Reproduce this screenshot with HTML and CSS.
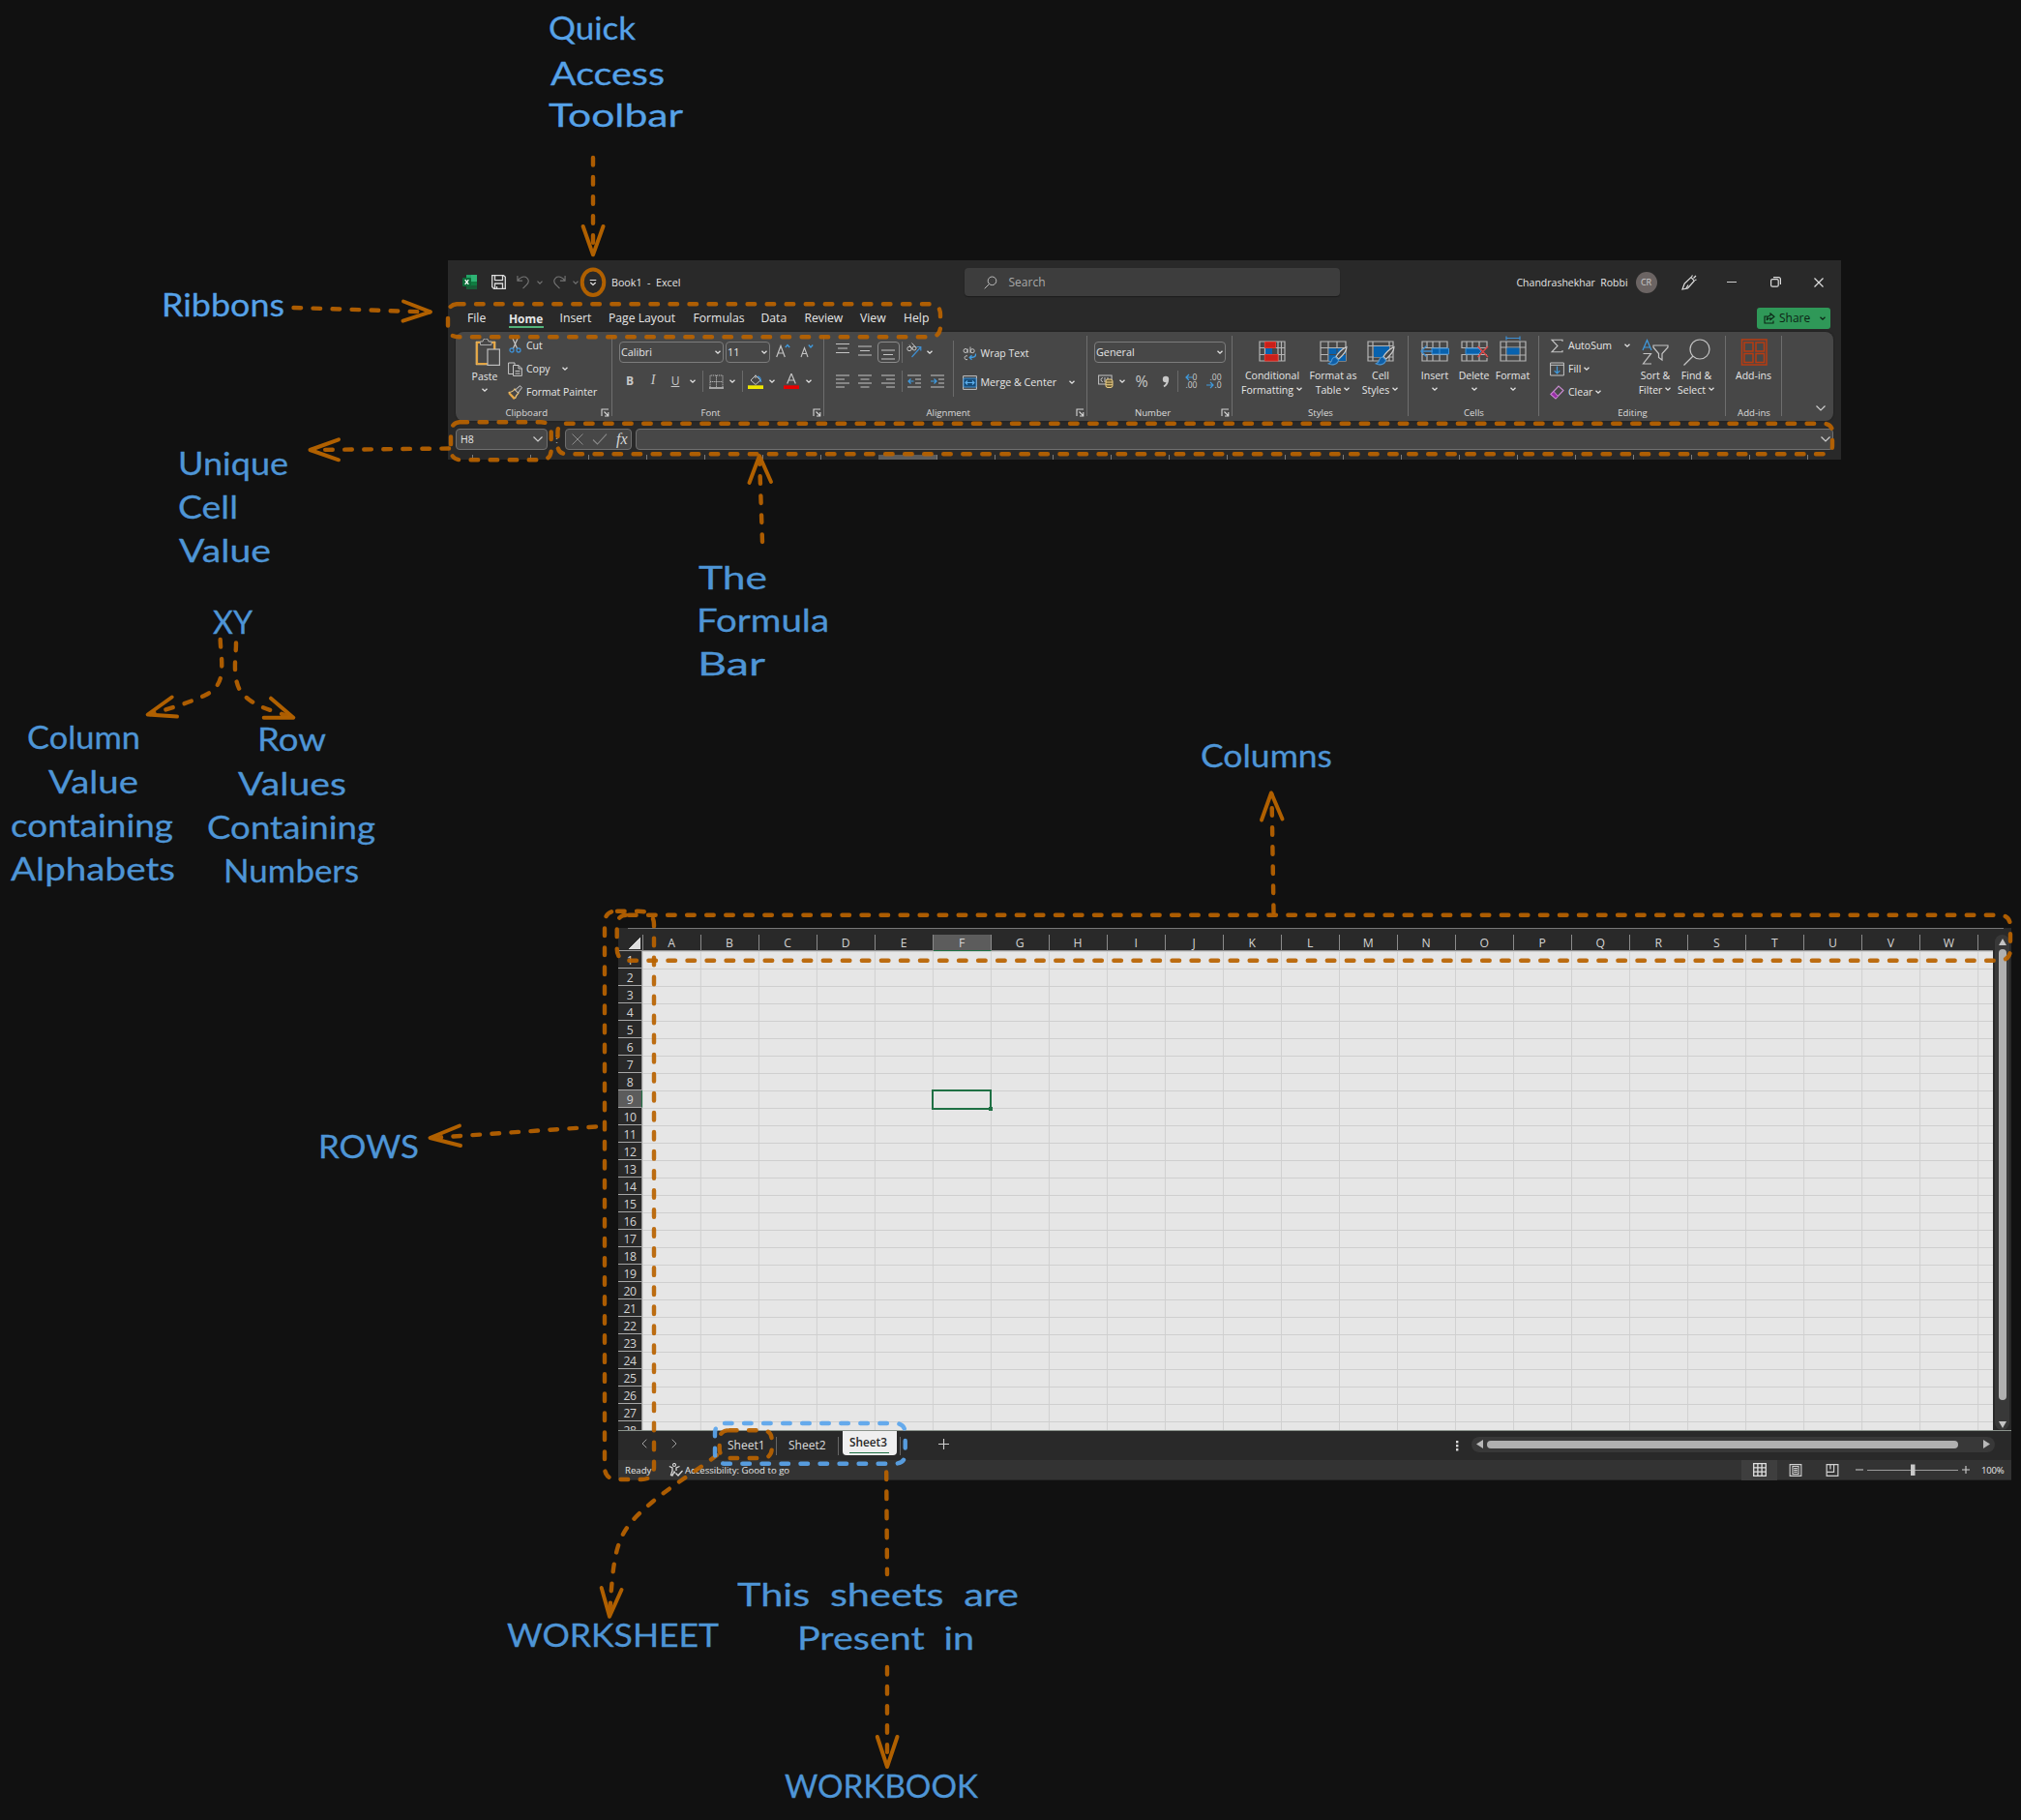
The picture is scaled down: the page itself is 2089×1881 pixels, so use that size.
FILE: index.html
```html
<!DOCTYPE html>
<html lang="en">
<head>
<meta charset="utf-8">
<title>Excel window anatomy</title>
<link rel="stylesheet" href="styles.css">
</head>
<body>
<svg class="defs" width="0" height="0">
  <symbol id="chev" viewBox="0 0 8 8"><path d="M1.5 2.7 4 5.2 6.5 2.7" fill="none" stroke="#e2e2e2" stroke-width="1.3"/></symbol>
  <symbol id="chev-lg" viewBox="0 0 12 8"><path d="M1.5 1.5 6 6 10.500 1.500" fill="none" stroke="#cfcfcf" stroke-width="1.2"/></symbol>
  <symbol id="launch" viewBox="0 0 9 9"><path d="M1 8V1h7M3.500 3.500 7.500 7.500M7.800 4v4H4" fill="none" stroke="#d5d5d5" stroke-width="1.100"/></symbol>
  <symbol id="brush" viewBox="0 0 20 20"><path d="M19 1.500c-4 1-9 7-10.500 9.500l2.500 2.500C14 11 19 6 19 1.500z" fill="#474747" stroke="#c8c8c8" stroke-width="1.200"/><path d="M8 11.500c-3 0-3.500 2-4 4-.5 1.500-1.500 2-3 2.500 3 1.500 9 1.500 10-3.500z" fill="#0f5fa8" stroke="#4c97d3"/></symbol>
</svg>

<main class="canvas">
  <section class="window ribbon-window">
    <header class="titlebar">
      <svg class="logo" viewBox="0 0 15 15"><rect x="4" width="11" height="15" rx="1" fill="#107c41"/><rect x="9" width="6" height="7" fill="#2fb374"/><rect x="4" y="0" width="5" height="4" fill="#21a366"/><rect x="4" y="11" width="11" height="4" fill="#185c37"/><rect y="3" width="9" height="9" rx="1" fill="#0c6b38"/><path d="M2.700 5.200 6.300 9.900M6.300 5.200 2.700 9.900" stroke="#fff" stroke-width="1.300"/></svg>
      <svg class="save" viewBox="0 0 15 15"><path d="M.7.700h11.800l1.800 1.500v12.100H2.500L.7 12.500zM3.500.7v5h8v-5M3.500 14.300V9h8v5.300M5.500 14v-2" fill="none" stroke="#dcdcdc" stroke-width="1.300"/></svg>
      <svg class="undo" viewBox="0 0 15 15"><path d="M1 .5V6h5.500M1 6C4 1.500 9 .5 11.500 3s1.500 5.500-.5 7.500L7 14.500" fill="none" stroke="#757575" stroke-width="1.200"/></svg>
      <svg class="dim-chev" viewBox="0 0 8 8"><path d="M1.500 2.700 4 5.200 6.500 2.700" fill="none" stroke="#757575" stroke-width="1.200"/></svg>
      <svg class="redo" viewBox="0 0 15 15"><path d="M14 .5V6H8.500M14 6C11 1.500 6 .5 3.500 3S2 8.500 4 10.500l4 4" fill="none" stroke="#757575" stroke-width="1.200"/></svg>
      <svg class="dim-chev" viewBox="0 0 8 8"><path d="M1.500 2.700 4 5.200 6.500 2.700" fill="none" stroke="#757575" stroke-width="1.200"/></svg>
      <svg class="qat" viewBox="0 0 8 8"><path d="M.7 1.500h6.600M1.300 4 4 6.500 6.700 4" fill="none" stroke="#e4e4e4" stroke-width="1.200"/></svg>
      <span class="book">Book1&nbsp; -&nbsp; Excel</span>
      <div class="search"><svg viewBox="0 0 14 14"><circle cx="8.500" cy="5.300" r="4.300" fill="none" stroke="#bdbdbd"/><path d="M5.500 8.500.7 13.300" stroke="#bdbdbd"/></svg><span>Search</span></div>
      <span class="user">Chandrashekhar&nbsp; Robbi</span>
      <span class="avatar">CR</span>
      <svg class="pen" viewBox="0 0 16 16"><path d="M1 15 3.200 9 10 2.500l3.300 3.700L6.500 14 1 15zM4.500 14.500 7 10.500M10.500 2 11.500.5M12.500 3.500 15 1M14 5.500 15.500 5" fill="none" stroke="#dedede" stroke-width="1.200"/></svg>
      <span class="min"></span>
      <svg class="restore" viewBox="0 0 11 11"><rect x=".6" y="2.600" width="7.600" height="7.600" rx="1.500" fill="none" stroke="#dedede" stroke-width="1.200"/><path d="M3 .6h5.400a2 2 0 0 1 2 2V8" fill="none" stroke="#dedede" stroke-width="1.200"/></svg>
      <svg class="close" viewBox="0 0 10 10"><path d="M.5.500l9 9M9.500.5l-9 9" stroke="#dedede" stroke-width="1.200"/></svg>
    </header>

    <nav class="tabs">
      <span class="t-file">File</span><span class="t-home">Home</span><span class="t-insert">Insert</span><span class="t-page">Page Layout</span><span class="t-form">Formulas</span><span class="t-data">Data</span><span class="t-review">Review</span><span class="t-view">View</span><span class="t-help">Help</span>
      <div class="share"><svg viewBox="0 0 12 12"><path d="M4 4H1v7h9V8.500M7 1l4 3.300L7 7.500V5.700C5 5.700 4 6.500 3.300 8c0-3 1.500-4.700 3.700-5z" fill="none" stroke="#0c2415" stroke-width="1.100"/></svg><span>Share</span><svg class="c" viewBox="0 0 8 8"><path d="M1.500 2.700 4 5.200 6.500 2.700" fill="none" stroke="#0c2415" stroke-width="1.300"/></svg></div>
    </nav>

    <div class="ribbon">
      <div class="group g-clip">
        <div class="body">
          <div class="paste">
            <svg viewBox="0 0 26 28"><path d="M2 4h18v22H2z" fill="none" stroke="#e0a03c" stroke-width="2.200"/><path d="M1 3h20v24H1z" fill="none" stroke="#f0d090" stroke-width=".5"/><path d="M5.500 6.500V3H8a3 3 0 0 1 6 0h3v3.500z" fill="#474747" stroke="#a8a8a8"/><rect x="13" y="11" width="12.400" height="16.400" fill="#474747" stroke="#bdbdbd" stroke-width="1.200"/></svg>
            <span>Paste</span><svg class="c"><use href="#chev"/></svg>
          </div>
          <div class="clip-list">
            <div><svg viewBox="0 0 15 15"><path d="M5 0l4.500 10M10 0 5.500 10" stroke="#c8c8c8" stroke-width="1.200"/><circle cx="4" cy="12" r="2" fill="none" stroke="#3f8fd2" stroke-width="1.300"/><circle cx="11" cy="12" r="2" fill="none" stroke="#3f8fd2" stroke-width="1.300"/></svg><span>Cut</span></div>
            <div><svg viewBox="0 0 15 15"><path d="M5 12.500H.6V1H7v2M5.500 3.500h5.500l3.400 3.400v7.500H5.500zM11 3.500V7h3.400M7.500 9.500h5M7.500 12h5" fill="none" stroke="#c8c8c8"/></svg><span class="w38">Copy</span><svg class="c"><use href="#chev"/></svg></div>
            <div><svg viewBox="0 0 15 15"><path d="M1 6.500 8 13.500 6 15 .5 9z" fill="#e8a845"/><path d="M.7 7.500C4 7.500 6 5.500 7 4l4 4c-1.500 1.500-3 3.500-3.500 6" fill="none" stroke="#e9c37c" stroke-width="1.200"/><path d="M7.500 5 12.500.7l2 2L10.500 8z" fill="#555" stroke="#ccc"/></svg><span>Format Painter</span></div>
          </div>
        </div>
        <footer><span>Clipboard</span><svg><use href="#launch"/></svg></footer>
      </div>

      <div class="group g-font">
        <div class="row r1"><div class="field"><span>Calibri</span><svg class="c"><use href="#chev"/></svg></div><i></i><div class="field"><span>11</span><svg class="c"><use href="#chev"/></svg></div>
          <svg width="15" height="15" viewBox="0 0 15 15"><path d="M.7 14 5 2.500 9.300 14M2.200 10h5.600" fill="none" stroke="#c4c4c4" stroke-width="1.200"/><path d="M9.800 4 12 1.500 14.200 4" fill="none" stroke="#3f9be0" stroke-width="1.300"/></svg>
          <svg width="14" height="15" viewBox="0 0 14 15"><path d="M1 14 4.500 4.500 8 14M2.300 10.500h4.500" fill="none" stroke="#c4c4c4" stroke-width="1.100"/><path d="M8.800 1.500 11 4l2.200-2.500" fill="none" stroke="#3f9be0" stroke-width="1.300"/></svg>
        </div>
        <div class="row r2"><b>B</b><em>I</em><u>U</u><svg class="c"><use href="#chev"/></svg><s></s>
          <svg width="15" height="15" viewBox="0 0 15 15"><path d="M1 13V1h13v12M7.500 1v12M1 7.500h13" fill="none" stroke="#b8b8b8" stroke-dasharray="1.300 .8"/><path d="M0 14h15" stroke="#d0d0d0" stroke-width="1.400"/></svg>
          <svg class="c"><use href="#chev"/></svg><s></s>
          <svg width="16" height="16" viewBox="0 0 16 16"><path d="M3 7 8 2l5 5-5 4.500zM8 5V1.500" fill="none" stroke="#c4c4c4"/><path d="M10 3c2.500.5 3.500 2.500 3.500 6" fill="none" stroke="#3f8fd2" stroke-width="1.400"/><rect y="12.300" width="16" height="3.700" fill="#eee600"/></svg>
          <svg class="c"><use href="#chev"/></svg>
          <svg width="16" height="16" viewBox="0 0 16 16"><path d="M3.700 10.500 8 0l4.300 10.500M5.200 7h5.600" fill="none" stroke="#c4c4c4" stroke-width="1.200"/><rect y="12.300" width="16" height="3.700" fill="#e60000"/></svg>
          <svg class="c"><use href="#chev"/></svg>
        </div>
        <footer><span>Font</span><svg><use href="#launch"/></svg></footer>
      </div>

      <div class="group g-align">
        <div class="body">
          <div class="left">
            <div class="row r1">
              <svg width="14" height="16" viewBox="0 0 14 16"><path d="M0 1.500h14M2 6h10M0 10.500h14" stroke="#c4c4c4" stroke-width="1.200"/></svg>
              <svg width="14" height="16" viewBox="0 0 14 16"><path d="M0 4h14M2 8.500h10M0 13h14" stroke="#c4c4c4" stroke-width="1.200"/></svg>
              <span class="on"><svg width="14" height="16" viewBox="0 0 14 16"><path d="M0 6h14M2 10.500h10M0 15h14" stroke="#c4c4c4" stroke-width="1.200"/></svg></span><s></s>
              <svg width="16" height="16" viewBox="0 0 16 16"><circle cx="3" cy="6.500" r="2.200" fill="none" stroke="#c4c4c4"/><path d="M3 2.500l3 4.500M5.500.5l4.500 5" stroke="#c4c4c4"/><circle cx="8" cy="6" r="2" fill="none" stroke="#c4c4c4"/><path d="M5.500 15 14.500 5M10.500 4.500h4.300v4" fill="none" stroke="#3f8fd2" stroke-width="1.200"/></svg>
              <svg class="c"><use href="#chev"/></svg>
            </div>
            <div class="row r2">
              <svg width="14" height="14" viewBox="0 0 14 14"><path d="M0 1h14M0 5h9M0 9h14M0 13h9" stroke="#c4c4c4" stroke-width="1.200"/></svg>
              <svg width="14" height="14" viewBox="0 0 14 14"><path d="M0 1h14M2.500 5h9M0 9h14M2.500 13h9" stroke="#c4c4c4" stroke-width="1.200"/></svg>
              <svg width="14" height="14" viewBox="0 0 14 14"><path d="M0 1h14M5 5h9M0 9h14M5 13h9" stroke="#c4c4c4" stroke-width="1.200"/></svg><s></s>
              <svg width="14" height="14" viewBox="0 0 14 14"><path d="M0 1h14M8 5h6M8 9h6M0 13h14" stroke="#c4c4c4" stroke-width="1.200"/><path d="M6.500 7H1M3.500 4.500 1 7l2.500 2.500" fill="none" stroke="#3f9be0" stroke-width="1.200"/></svg>
              <svg width="14" height="14" viewBox="0 0 14 14"><path d="M0 1h14M8 5h6M8 9h6M0 13h14" stroke="#c4c4c4" stroke-width="1.200"/><path d="M0 7h5.500M3.500 4.500 6 7 3.500 9.500" fill="none" stroke="#3f9be0" stroke-width="1.200"/></svg>
            </div>
          </div>
          <div class="right">
            <div><svg viewBox="0 0 15 15"><circle cx="3" cy="4.500" r="2" fill="none" stroke="#c4c4c4"/><path d="M5.200 2.500v4.300M8 .5v6.300" stroke="#c4c4c4"/><circle cx="10.200" cy="4.700" r="2" fill="none" stroke="#c4c4c4"/><path d="M5 10a2 2 0 1 0 0 3.500" fill="none" stroke="#c4c4c4"/><path d="M13.500 7.500c.5 3-1.500 4-6 4M9.500 9.300 7.200 11.500l2.300 2.300" fill="none" stroke="#3f9be0" stroke-width="1.300"/></svg><span>Wrap Text</span></div>
            <div><svg viewBox="0 0 15 15"><path d="M.6.600h13.800v13.800H.6z" fill="none" stroke="#c4c4c4"/><path d="M1 3h13v9H1z" fill="#174c78" stroke="#3f8fd2"/><path d="M3 7.500h9M5 5.500l-2 2 2 2M10 5.500l2 2-2 2" fill="none" stroke="#5db0ee" stroke-width="1.100"/></svg><span class="w90">Merge &amp; Center</span><svg class="c"><use href="#chev"/></svg></div>
          </div>
        </div>
        <footer><span>Alignment</span><svg><use href="#launch"/></svg></footer>
      </div>

      <div class="group g-num">
        <div class="row r1"><div class="field"><span>General</span><svg class="c"><use href="#chev"/></svg></div></div>
        <div class="row r2">
          <svg width="16" height="14" viewBox="0 0 16 14"><rect x=".6" y="1" width="13.500" height="9" fill="none" stroke="#c4c4c4"/><path d="M5 3.500a2 2 0 1 0 0 4M7 3v5M10 3v5" fill="none" stroke="#c4c4c4"/><rect x="8" y="5" width="7" height="8.500" rx="2" fill="#6c5d35" stroke="#edcf86"/><path d="M8 8h7M8 10.700h7" stroke="#edcf86"/></svg>
          <svg class="c"><use href="#chev"/></svg><span class="pct">%</span>
          <svg width="8" height="13" viewBox="0 0 8 13"><circle cx="4" cy="4" r="3.200" fill="#c8c8c8"/><path d="M6 4c0 3.500-1.500 6-4 7.500" fill="none" stroke="#c8c8c8" stroke-width="2"/></svg><s></s>
          <span class="dec"><span><svg viewBox="0 0 8 8"><path d="M8 4H1M4 1 1 4l3 3" fill="none" stroke="#3f9be0" stroke-width="1.200"/></svg>0</span><span>.00</span></span><span class="dec"><span>.00</span><span><svg viewBox="0 0 8 8"><path d="M0 4h7M4 1l3 3-3 3" fill="none" stroke="#3f9be0" stroke-width="1.200"/></svg>.0</span></span>
        </div>
        <footer><span>Number</span><svg><use href="#launch"/></svg></footer>
      </div>

      <div class="group g-styles">
        <div class="bigs">
          <div class="big"><svg viewBox="0 0 30 26"><path d="M2 1h26v20H2zM2 7.500h26M2 14.500h26M7.500 1v20M21 1v20M24.500 1v20" fill="none" stroke="#b5b5b5" stroke-width="1.200"/><path d="M7.500 1.500h11v6h-11zM7.500 14.500h13.500v6.500h-13.500z" fill="#c9201a" stroke="#e0342c"/><path d="M8 8h7v6H8z" fill="#0862ae"/></svg><span>Conditional</span><span>Formatting<svg class="c"><use href="#chev"/></svg></span></div>
          <div class="big"><svg viewBox="0 0 30 26"><path d="M2 1h26v20H2zM2 7.500h26M2 14.500h26M10 1v20M19 1v20" fill="none" stroke="#b5b5b5" stroke-width="1.200"/><path d="M10.500 8H28v13H10.500z" fill="#0862ae"/><path d="M10.500 14.500H28M19 8v13" stroke="#474747"/><svg x="9" y="5" width="21" height="21"><use href="#brush"/></svg></svg><span>Format as</span><span>Table<svg class="c"><use href="#chev"/></svg></span></div>
          <div class="big"><svg viewBox="0 0 30 26"><path d="M2 1h26v20H2zM2 5.500h26M2 17h26M7 1v20M24 1v20" fill="none" stroke="#b5b5b5" stroke-width="1.200"/><path d="M8 6h16v11H8z" fill="#0862ae"/><svg x="9" y="5" width="21" height="21"><use href="#brush"/></svg></svg><span>Cell</span><span>Styles<svg class="c"><use href="#chev"/></svg></span></div>
        </div>
        <footer><span>Styles</span></footer>
      </div>

      <div class="group g-cells">
        <div class="bigs">
          <div class="big"><svg viewBox="0 0 30 26"><path d="M2 1h26v20H2zM2 7.500h26M2 14.500h26M7 1v6.500M13 1v6.500M20 1v6.500M7 14.500V21M13 14.500V21M20 14.500V21" fill="none" stroke="#b5b5b5" stroke-width="1.200"/><path d="M12 8h17.500v6H12z" fill="#0862ae" stroke="#3f8fd2"/><path d="M20 8v6" stroke="#3f8fd2"/><path d="M13 11H1M6.500 5.500 1 11l5.500 5.500" fill="none" stroke="#3f8fd2" stroke-width="1.400"/></svg><span>Insert</span><svg class="c"><use href="#chev"/></svg></div>
          <div class="big"><svg viewBox="0 0 30 26"><path d="M28 7V1H2v6.500h26M28 18v3H2v-6.500h26M7 1v6.500M13 1v6.500M20 1v6.500M7 14.500V21M13 14.500V21M20 14.500V21" fill="none" stroke="#b5b5b5" stroke-width="1.200"/><path d="M6 8h13l3 3-3 3H6z" fill="#0862ae" stroke="#3f8fd2"/><path d="M18.500 6 29 17M29 6 18.500 17" stroke="#e04848" stroke-width="1.400"/></svg><span>Delete</span><svg class="c"><use href="#chev"/></svg></div>
          <div class="big"><svg viewBox="0 0 30 26"><path d="M2 1h26v20H2zM2 7h26M2 15h26M8 1v20M22 1v20" fill="none" stroke="#b5b5b5" stroke-width="1.200"/><path d="M8.500 7.500h13v7h-13z" fill="#0862ae"/><path d="M8-2.500h14M8-4.500v4M22-4.500v4" stroke="#3f8fd2" stroke-width="1.200"/></svg><span>Format</span><svg class="c"><use href="#chev"/></svg></div>
        </div>
        <footer><span>Cells</span></footer>
      </div>

      <div class="group g-edit">
        <div class="body">
          <div class="clip-list">
            <div><svg viewBox="0 0 15 15"><path d="M13 3V1.200H2l6 6.300-6 6.300h11V12" fill="none" stroke="#c4c4c4" stroke-width="1.100"/></svg><span class="w55">AutoSum</span><svg class="c"><use href="#chev"/></svg></div>
            <div><svg viewBox="0 0 15 15"><path d="M.6 1h13.800v13H.6zM.6 3.300h13.800" fill="none" stroke="#c4c4c4"/><path d="M7.500 4.500V12M4.700 9.200 7.500 12l2.800-2.800" fill="none" stroke="#3f9be0" stroke-width="1.200"/></svg><span>Fill</span><svg class="c"><use href="#chev"/></svg></div>
            <div><svg viewBox="0 0 15 15"><path d="M1 9.500 9 1l5 4.500-8 8.500z" fill="none" stroke="#c88ad0" stroke-width="1.200"/><path d="M1 9.500 4 6.500l4.500 5L6 14z" fill="#9a30a8" stroke="#c88ad0"/></svg><span>Clear</span><svg class="c"><use href="#chev"/></svg></div>
          </div>
          <div class="bigs">
            <div class="big"><svg viewBox="0 0 30 28"><path d="M2 12 6.500 1.500 11 12M3.500 9h6" fill="none" stroke="#3f9be0" stroke-width="1.200"/><path d="M2.500 15.500h8L2.500 26h8.500M13 7h15v2l-6 6.500V22l-3.500-2.500v-4L13 9z" fill="none" stroke="#c4c4c4" stroke-width="1.200"/></svg><span>Sort &amp;</span><span>Filter<svg class="c"><use href="#chev"/></svg></span></div>
            <div class="big"><svg viewBox="0 0 30 28"><circle cx="18" cy="11" r="10" fill="none" stroke="#c4c4c4" stroke-width="1.200"/><path d="M11 18 1.500 27.500" stroke="#c4c4c4" stroke-width="1.200"/></svg><span>Find &amp;</span><span>Select<svg class="c"><use href="#chev"/></svg></span></div>
          </div>
        </div>
        <footer><span>Editing</span></footer>
      </div>

      <div class="group g-add">
        <div class="bigs"><div class="big"><svg viewBox="0 0 30 28"><path d="M2.500 1h25.500v26H2.500zM5 4h9v9H5zM17 4h8.500v9H17zM5 15.500h9v9H5zM17 15.500h8.500v9H17z" fill="none" stroke="#b83c12" stroke-width="1.500"/></svg><span>Add-ins</span></div></div>
        <footer><span>Add-ins</span></footer>
      </div>
      <div class="collapse"><svg width="12" height="8"><use href="#chev-lg"/></svg></div>
    </div>

    <div class="formula">
      <div class="namebox"><span>H8</span><svg width="12" height="8"><use href="#chev-lg"/></svg></div>
      <span class="grip">⋮</span>
      <div class="fx"><svg width="12" height="12" viewBox="0 0 12 12"><path d="M.5.500l11 11M11.500.5l-11 11" stroke="#8a8a8a"/></svg><svg width="16" height="12" viewBox="0 0 16 12"><path d="M1 6.500 5.500 11 15 .7" fill="none" stroke="#8a8a8a" stroke-width="1.100"/></svg><em>fx</em></div>
      <div class="input"><svg width="12" height="8"><use href="#chev-lg"/></svg></div>
    </div>
    <div class="strip"></div>
  </section>

  <section class="window sheet-window">
    <div class="topline"></div>
    <div class="sheet">
      <div class="cols"><span class="corner"></span><span>A</span><span>B</span><span>C</span><span>D</span><span>E</span><span class="sel">F</span><span>G</span><span>H</span><span>I</span><span>J</span><span>K</span><span>L</span><span>M</span><span>N</span><span>O</span><span>P</span><span>Q</span><span>R</span><span>S</span><span>T</span><span>U</span><span>V</span><span>W</span></div>
      <div class="rows"><span>1</span><span>2</span><span>3</span><span>4</span><span>5</span><span>6</span><span>7</span><span>8</span><span class="sel">9</span><span>10</span><span>11</span><span>12</span><span>13</span><span>14</span><span>15</span><span>16</span><span>17</span><span>18</span><span>19</span><span>20</span><span>21</span><span>22</span><span>23</span><span>24</span><span>25</span><span>26</span><span>27</span><span>28</span></div>
      <div class="cells"><div class="active"></div></div>
      <div class="vscroll"><svg width="8" height="7"><path d="M4 0 8 7H0z" fill="#c4c4c4"/></svg><i></i><svg width="8" height="7"><path d="M4 7 8 0H0z" fill="#c4c4c4"/></svg></div>
    </div>
    <div class="sheetbar">
      <svg class="nav" viewBox="0 0 6 10"><path d="M5.300.7 1 5l4.300 4.300" fill="none" stroke="#a0a0a0"/></svg>
      <svg class="nav n2" viewBox="0 0 6 10"><path d="M.7.700 5 5 .7 9.300" fill="none" stroke="#a0a0a0"/></svg>
      <span class="s1">Sheet1</span><span class="s2">Sheet2</span><span class="s3"><span>Sheet3</span></span><span class="end"></span>
      <svg class="plus" viewBox="0 0 11 11"><path d="M5.500 0v11M0 5.500h11" stroke="#d0d0d0" stroke-width="1.100"/></svg>
      <svg class="dots" viewBox="0 0 3 11"><path d="M0 0h2.400v2.400H0zM0 4h2.400v2.400H0zM0 8h2.400v2.400H0z" fill="#d8d8d8"/></svg>
      <div class="hscroll"><svg width="7" height="9"><path d="M7 0v9L0 4.500z" fill="#b8b8b8"/></svg><i></i><svg width="7" height="9"><path d="M0 0v9l7-4.500z" fill="#b8b8b8"/></svg></div>
    </div>
    <div class="status">
      <span class="ready">Ready</span>
      <svg class="acc" viewBox="0 0 15 14"><circle cx="6" cy="2" r="1.500" fill="none" stroke="#ddd" stroke-width="1.100"/><path d="M.8 3.500 4 5v3L2.500 12.500l1.500.5 2-4 1 1.500M11.500 3.500 8 5v3" fill="none" stroke="#ddd" stroke-width="1.300"/><path d="M7.500 10.500 10 13l4.500-5" fill="none" stroke="#ddd" stroke-width="1.300"/></svg>
      <span class="acct">Accessibility: Good to go</span>
      <span class="view"><svg width="14" height="14" viewBox="0 0 14 14"><path d="M.7.700h12.600v12.600H.7zM4.900.7v12.600M9.100.7v12.600M.7 4.900h12.600M.7 9.100h12.600" fill="none" stroke="#e0e0e0" stroke-width="1.300"/></svg></span>
      <svg class="v2" viewBox="0 0 14 14"><path d="M.7.700h12.600v12.600H.7zM3.700 2.700h6.600v8.600H3.700zM5 5h4M5 7h4M5 9h4" fill="none" stroke="#d0d0d0" stroke-width="1.200"/></svg>
      <svg class="v3" viewBox="0 0 14 14"><path d="M.7.700h12.600v12.600H.7zM.7 9h8V.7M4.800.7V6" fill="none" stroke="#d0d0d0" stroke-width="1.300"/></svg>
      <svg class="zoom" viewBox="0 0 118 12"><path d="M0 6h8M110 6h8M114 2v8" stroke="#cfcfcf" stroke-width="1.100"/><path d="M12 6.500h94" stroke="#9a9a9a" stroke-width="1.200"/><path d="M57 .5h4.500v11.500H57z" fill="#c8c8c8"/></svg>
      <span class="pc">100%</span>
    </div>
  </section>

  <svg class="notes" width="2089" height="1881" viewBox="0 0 2089 1881">
    <g class="dash">
      <path d="M472 314.300h489q11 0 11 11v12q0 11-11 11H474q-11 0-11-11v-12q0-10 9-11"/>
      <path d="M475.500 436.300H559q10.700 0 10.700 10.700v17.500q0 10.800-10.700 10.800H477q-11 0-11-11V448q0-11 9-11.700"/>
      <path d="M585 437.700h1299q10 0 10 9v14q0 8.500-10 8.500H586q-9.500 0-9.500-9v-14q0-8 8-8.500"/>
      <path d="M638 941.700h22q16 0 16 14V1516q0 13-13 13h-25q-13 0-13-13V955q0-13 11-13.300"/>
      <path d="M650 945.700h1416q12 0 12 12v23q0 12-12 12H650q-12.300 0-12.300-12v-23q0-12 10-12"/>
      <path d="M754 1478.300h34q9.700 0 9.700 10v8.700q0 10-10 10h-34q-10 0-10-10v-9q0-9.700 10-9.700"/>
      <path d="M613 163v98"/>
      <path d="M303.500 318 444 322.500"/>
      <path d="M464 463.500 322 465"/>
      <path d="M227.700 661C228 672 230 682 229 694S223 713 212 718.500 178 732 155 738"/>
      <path d="M244 664.500C244 676 242 686 243.500 698S248 716 258 723.500 280 734 302 741.500"/>
      <path d="M788 560 785 473"/>
      <path d="M1316.500 943 1314.500 821"/>
      <path d="M616 1164.500 446 1176"/>
      <path d="M741 1504C720 1520 695 1535 675 1551.700S644 1580 638.300 1600 632 1645 630 1669"/>
      <path d="M917 1723v101"/>
      <path d="M916.200 1521.500 917 1627"/>
    </g>
    <g class="solid">
      <ellipse cx="613" cy="291.700" rx="11.300" ry="13.300"/>
      <path d="M602.700 234 613 263.300 623.500 234"/>
      <path d="M417 311.500 445 322.300 416.500 331.700"/>
      <path d="M350 454.300 320.500 465 350 475.300"/>
      <path d="M177.700 720.500 152.700 738.500 183 740.500"/>
      <path d="M280 721.700 303.300 741.700H272.700"/>
      <path d="M774.500 499 785 471 797 498"/>
      <path d="M1304 847.500 1314 819.500 1325.500 846.500"/>
      <path d="M475 1163.500 444.500 1176 476 1184"/>
      <path d="M621.700 1641 630 1670.700 642.500 1643"/>
      <path d="M906.800 1795 917 1826 927.500 1795"/>
    </g>
    <path class="dash blue" d="M749 1471h176q10.700 0 10.700 11v20q0 10.700-11 10.700H750q-11 0-11-11v-20q0-10.700 10-10.700"/>
    <g class="hand bright">
      <text x="567" y="41" textLength="90" lengthAdjust="spacingAndGlyphs">Quick</text>
      <text x="569" y="88" textLength="118" lengthAdjust="spacingAndGlyphs">Access</text>
      <text x="567" y="131" textLength="139" lengthAdjust="spacingAndGlyphs">Toolbar</text>
      <text x="167" y="327" textLength="127" lengthAdjust="spacingAndGlyphs">Ribbons</text>
    </g>
    <g class="hand">
      <text x="184" y="491" textLength="114" lengthAdjust="spacingAndGlyphs">Unique</text>
      <text x="184" y="536" textLength="62" lengthAdjust="spacingAndGlyphs">Cell</text>
      <text x="185" y="581" textLength="95" lengthAdjust="spacingAndGlyphs">Value</text>
      <text x="220" y="655" textLength="41" lengthAdjust="spacingAndGlyphs">XY</text>
      <text x="28" y="774" textLength="117" lengthAdjust="spacingAndGlyphs">Column</text>
      <text x="50" y="820" textLength="93" lengthAdjust="spacingAndGlyphs">Value</text>
      <text x="11" y="865" textLength="168" lengthAdjust="spacingAndGlyphs">containing</text>
      <text x="11" y="910" textLength="170" lengthAdjust="spacingAndGlyphs">Alphabets</text>
      <text x="266" y="776" textLength="71" lengthAdjust="spacingAndGlyphs">Row</text>
      <text x="246" y="822" textLength="112" lengthAdjust="spacingAndGlyphs">Values</text>
      <text x="214" y="867" textLength="174" lengthAdjust="spacingAndGlyphs">Containing</text>
      <text x="231" y="912" textLength="140" lengthAdjust="spacingAndGlyphs">Numbers</text>
      <text x="722" y="609" textLength="71" lengthAdjust="spacingAndGlyphs">The</text>
      <text x="720" y="653" textLength="137" lengthAdjust="spacingAndGlyphs">Formula</text>
      <text x="721" y="698" textLength="70" lengthAdjust="spacingAndGlyphs">Bar</text>
      <text x="1241" y="793" textLength="136" lengthAdjust="spacingAndGlyphs">Columns</text>
      <text x="329" y="1197" textLength="104" lengthAdjust="spacingAndGlyphs">ROWS</text>
      <text x="524" y="1702" textLength="219" lengthAdjust="spacingAndGlyphs">WORKSHEET</text>
      <text x="762" y="1660" textLength="291" lengthAdjust="spacingAndGlyphs">This sheets are</text>
      <text x="824" y="1705" textLength="183" lengthAdjust="spacingAndGlyphs">Present in</text>
      <text x="811" y="1858" textLength="200" lengthAdjust="spacingAndGlyphs">WORKBOOK</text>
    </g>
  </svg>
</main>
</body>
</html>
```
FILE: styles.css
```css
* { box-sizing: border-box; }
body { margin: 0; background: #111; font-family: "Open Sans", "Noto Sans", sans-serif; font-size: 10.5px; color: #e6e6e6; }
svg { display: block; flex: none; }
.defs { position: absolute; }
.canvas { position: relative; width: 2089px; height: 1881px; overflow: hidden; }
.window { position: absolute; overflow: hidden; background: #292929; white-space: nowrap; }
.ribbon-window { left: 463px; top: 269px; width: 1440px; height: 206px; }
.sheet-window { left: 639px; top: 959px; width: 1440px; height: 571px; }
.c { width: 8px; height: 8px; }

/* Title bar */
.titlebar { display: flex; align-items: center; height: 45px; padding-left: 15px; }
.logo { width: 15px; height: 15px; margin-right: 15px; }
.save { width: 15px; height: 15px; margin-right: 11px; }
.undo { width: 14px; height: 15px; margin-right: 6px; }
.dim-chev { width: 8px; height: 8px; }
.redo { width: 14px; height: 15px; margin: 0 6px 0 9px; }
.qat { width: 8px; height: 8px; margin: 0 15px 0 10px; }
.book { width: 364.500px; font-size: 10.700px; }
.search { display: flex; align-items: center; gap: 12px; width: 388px; height: 29px; padding-left: 20px; margin: 0 183px 0 0; border-radius: 4px; background: #3d3d3d; color: #a9a9a9; font-size: 12px; box-shadow: 0 1px 1px #1c1c1c; }
.search svg { width: 14px; height: 14px; }
.user { width: 123px; }
.avatar { width: 22px; height: 22px; border-radius: 50%; background: #6b6463; color: #ccc; font-size: 9px; line-height: 22px; text-align: center; }
.pen { width: 16px; height: 16px; margin: 0 31px 0 25px; }
.min { width: 10px; height: 1.500px; background: #ccc; }
.restore { width: 11px; height: 11px; margin: 0 34px 0 35px; }
.close { width: 10px; height: 10px; }

/* Tabs */
.tabs { display: flex; align-items: center; height: 29px; padding-left: 20px; font-size: 12.200px; }
.t-file { width: 43px; } .t-home { width: 52.500px; font-weight: 700; font-size: 11.900px; position: relative; }
.t-home::after { content: ""; position: absolute; left: 0; bottom: -2px; width: 36px; height: 2px; background: #53b37a; }
.t-insert { width: 50.500px; } .t-page { width: 87.500px; } .t-form { width: 70px; } .t-data { width: 45px; } .t-review { width: 57.500px; } .t-view { width: 45px; } .t-help { width: 26px; }
.share { display: flex; align-items: center; width: 76px; height: 22px; margin-left: auto; margin-right: 11px; padding-left: 7px; border-radius: 3px; background: #2f9858; color: #0c2415; }
.share svg { width: 12px; height: 12px; } .share span { width: 41px; margin-left: 4px; font-size: 12px; }
.share .c { width: 8px; height: 8px; }

/* Ribbon */
.ribbon { display: flex; height: 92px; margin: 0 8px; border-radius: 8px; background: #474747; box-shadow: 0 0 2px #1a1a1a; }
.group { position: relative; display: flex; flex-direction: column; height: 92px; }
.group::after { content: ""; position: absolute; right: 0; top: 4px; height: 83px; width: 1px; background: #6e6e6e; }
.g-clip { width: 161.500px; } .g-font { width: 219px; } .g-align { width: 272.500px; } .g-num { width: 150px; }
.g-styles { width: 182px; } .g-cells { width: 135px; } .g-edit { width: 193px; } .g-add { width: 58px; }
.group footer { display: flex; justify-content: center; align-items: center; height: 14px; margin-top: auto; margin-bottom: 2px; font-size: 9.600px; color: #dcdcdc; }
.group footer span { flex: 1; text-align: center; padding-right: 4px; }
.g-styles footer span, .g-cells footer span, .g-edit footer span, .g-add footer span { padding-right: 0; }
.group footer svg { width: 9px; height: 9px; margin-right: 3px; }
.group footer span:first-child:not(:last-child) { padding-left: 1px; }
.body { display: flex; height: 74px; }
.paste { display: flex; flex-direction: column; align-items: center; width: 40px; margin-left: 10px; padding-top: 7px; }
.paste > svg:first-child { width: 26px; height: 28px; margin-left: 5px; }
.paste span { line-height: 20px; margin-top: 1px; } .paste .c { margin-top: 0; }
.clip-list { padding: 2px 0 0 4px; }
.clip-list div { display: flex; align-items: center; height: 24px; }
.clip-list div > svg:first-child { width: 15px; height: 15px; margin-right: 4px; }
.w38 { width: 36px; } .w90 { width: 90px; } .w55 { width: 55px; }
.row { display: grid; align-items: center; justify-items: center; height: 22px; }
.row s { width: 1px; height: 22px; background: #6a6a6a; }
.group > .r1 { margin-top: 10px; } .r2 { margin-top: 8px; }
.field { display: flex; align-items: center; justify-content: space-between; width: 100%; height: 22px; padding: 0 1px 1px; border: 1px solid #7c7c7c; border-radius: 4px; font-size: 10.800px; }
.g-font .r1 { margin-left: 7.500px; grid-template-columns: 108px 2px 46px 27px 21px; justify-content: start; }
.g-font .r1 > svg { margin-top: -4px; }
.g-font .r2 { margin-left: 7.500px; grid-template-columns: 22px 26px 20px 16px 5px 22px 12px 8px 20px 14px 26px 10px; justify-content: start; font-size: 12px; color: #c8c8c8; }
.g-font b, .g-font em, .g-font u { margin-top: -2px; }
.g-font em { font-family: "Liberation Serif", serif; font-size: 14px; }
.left { width: 134px; height: 68px; padding: 10px 0 0 7.500px; position: relative; }
.left::after { content: ""; position: absolute; right: 0; top: 9px; width: 1px; height: 58px; background: #6a6a6a; }
.left .r1 { grid-template-columns: 23px 24px 24px 4px 22px 10px; justify-content: start; }
.left .r2 { grid-template-columns: 23px 24px 24px 4px 22px 25px; justify-content: start; }
.left .r1 > svg:not(.c) { margin-top: -4px; }
.on { display: grid; place-items: center; width: 23px; height: 22px; border: 1px solid #8c8c8c; border-radius: 4px; }
.right { padding: 11px 0 0 9px; }
.right div { display: flex; align-items: center; height: 22px; margin-bottom: 8px; }
.right div > svg:first-child { width: 15px; height: 15px; margin-right: 4px; }
.right .w90 { font-size: 10.700px; }
.g-num .row { margin-left: 7px; }
.g-num .r1 { width: 135.500px; }
.g-num .r2 { grid-template-columns: 24px 10px 30px 20px 5px 22px 26px; justify-content: start; }
.pct { font-size: 16px; color: #c8c8c8; line-height: 20px; }
.dec { display: flex; flex-direction: column; align-items: flex-end; font-size: 8.500px; line-height: 8px; color: #cdcdcd; }
.dec span { display: flex; } .dec svg { width: 8px; height: 8px; }
.bigs { display: grid; justify-content: start; height: 74px; padding-top: 9px; }
.g-styles .bigs { margin-left: 8px; grid-template-columns: 66px 60px 38px; }
.g-cells .bigs { margin-left: 6px; grid-template-columns: 42px 39px 41px; }
.big { display: flex; flex-direction: column; align-items: center; line-height: 15px; }
.big > svg:first-child { width: 30px; height: 26px; margin-bottom: 2.500px; overflow: visible; }
.big span { display: flex; align-items: center; gap: 2px; }
.big span .c { margin-top: -2px; }
.big > .c { margin-top: 2px; }
.g-edit .clip-list { width: 99px; padding-left: 11px; }
.g-edit .clip-list .c { margin-left: 2px; }
.g-edit .bigs { grid-template-columns: 42px 43px; padding-top: 7px; }
.g-edit .big > svg:first-child, .g-add .big > svg:first-child { height: 28px; }
.g-add .bigs { grid-template-columns: 57px; padding-top: 7px; }
.collapse { margin: 75px 0 0 34px; }

/* Formula bar */
.formula { display: flex; height: 22px; margin: 8px 8px 0; align-items: center; }
.namebox, .fx, .input { display: flex; align-items: center; height: 22px; border: 1px solid #6f6f6f; border-radius: 4px; background: #474747; }
.namebox { width: 95px; justify-content: space-between; padding: 0 3px 0 4px; }
.grip { width: 18px; text-align: center; color: #aaa; }
.fx { width: 69px; gap: 9px; padding-left: 6px; }
.fx em { font: italic 16px/18px "Liberation Serif", serif; color: #d8d8d8; }
.input { flex: 1; margin-left: 4px; justify-content: flex-end; padding-right: 1px; }
.strip { height: 5px; margin: 5px 0 0; background: linear-gradient(90deg, transparent 445px, #5c5c5c 445px 505px, transparent 505px), repeating-linear-gradient(90deg, transparent 0 25px, #7c7c7c 25px 26px, transparent 26px 60px); }

/* Worksheet */
.topline { height: 1px; background: #777; margin: 0 8px 0 10px; }
.sheet { display: grid; grid-template: 23px 495px / 25px 1396px 19px; }
.cols { grid-column: 1 / 3; display: grid; grid-template-columns: 25.500px repeat(23, 60.030px) 14px; padding-top: 6px; border-bottom: 1px solid #999; font-size: 12.200px; line-height: 17px; text-align: center; color: #d4d4d4; }
.cols span { border-right: 1px solid #8a8a8a; }
.cols .sel { background: #5c5c5c; border-bottom: 1px solid #217346; height: 17px; }
.corner { background: linear-gradient(135deg, transparent 50%, #dedede 50%) 11px 3px / 12px 12px no-repeat; }
.rows { grid-column: 1; grid-row: 2; height: 495px; overflow: hidden; font-size: 12.200px; letter-spacing: -.5px; text-align: center; color: #d4d4d4; }
.rows span { display: block; height: 18px; line-height: 19px; border-bottom: 1px solid #a8a8a8; border-right: 1px solid #999; }
.rows .sel { background: #5c5c5c; border-right: 1px solid #217346; }
.cells { position: relative; grid-column: 2; grid-row: 2; background: linear-gradient(transparent 17px, #cfcfcf 17px) 0 1px / 100% 18px, linear-gradient(90deg, transparent 59px, #d0d0d0 59px) .8px 0 / 60.030px 100%, #e6e6e6; }
.active { position: absolute; left: 299px; top: 143px; width: 62px; height: 21px; border: 2px solid #1f7044; }
.active::after { content: ""; position: absolute; right: -3px; bottom: -3px; width: 4px; height: 4px; background: #1f7044; }
.vscroll { grid-column: 3; grid-row: 1 / 3; display: flex; flex-direction: column; align-items: center; margin: 6px 2px 0 2px; padding: 4px 0 2px; border-radius: 8px; background: #383838; }
.vscroll i { width: 8px; height: 466px; margin: 4px 0 22px; border-radius: 4px; background: #b0b0b0; }
.sheetbar { display: flex; align-items: center; height: 31px; border-top: 1px solid #8b938c; font-size: 12px; color: #dcdcdc; }
.nav { width: 6px; height: 10px; margin-left: 24px; margin-top: -4px; } .n2 { margin-left: 25px; }
.s1 { width: 52px; margin-left: 51px; border-right: 1px solid #666; height: 19px; line-height: 17px; padding-left: 1px; } .s2 { width: 64px; padding-left: 12px; border-right: 1px solid #666; height: 19px; line-height: 17px; }
.s3 { align-self: flex-start; width: 56px; height: 25px; margin-left: 4px; padding-left: 7px; background: #efefef; color: #262626; font-weight: 600; font-size: 11.800px; border-radius: 0 0 4px 4px; }
.s3 span { display: block; width: 41px; height: 23px; line-height: 23px; border-bottom: 1px solid #217346; }
.end { width: 1px; height: 19px; margin-left: 3px; background: #666; }
.plus { width: 11px; height: 11px; margin-left: 39px; margin-top: -3px; }
.dots { width: 3px; height: 11px; margin-left: 524px; }
.hscroll { display: flex; align-items: center; width: 541px; height: 16px; margin-left: 13px; margin-top: -3px; padding: 0 5px; border-radius: 8px; background: #383838; }
.hscroll i { width: 487px; height: 8px; margin: 0 auto 0 4px; border-radius: 4px; background: #b0b0b0; }
.status { display: flex; align-items: center; height: 21px; background: #333; font-size: 9.600px; border-bottom: 1px solid #262626; }
.ready { width: 45px; margin-left: 7px; }
.acc { width: 15px; height: 14px; margin-right: 2px; }
.acct { width: 1092px; }
.view { display: grid; place-items: center; width: 37px; height: 21px; background: #3e3e3e; }
.v2, .v3 { width: 14px; height: 13px; margin-left: 12px; } .v3 { margin-left: 24px; }
.zoom { width: 118px; height: 12px; margin-left: 17px; }
.pc { margin-left: 12px; font-size: 9.600px; letter-spacing: -.2px; }

/* Annotations */
.notes { position: absolute; left: 0; top: 0; }
.dash { fill: none; stroke: #b86200; stroke-opacity: .93; stroke-width: 4.400; stroke-linecap: round; stroke-dasharray: 7.600 12.440; }
.dash.blue { stroke: #5aa5ec; }
.solid { fill: none; stroke: #b06000; stroke-width: 4; stroke-linecap: round; stroke-linejoin: round; }
.hand { font-family: Lato, sans-serif; font-size: 33px; word-spacing: 8px; fill: #4e95d6; stroke: #4e95d6; stroke-width: .3; }
.hand.bright { fill: #56a2e8; stroke: #56a2e8; }
```
